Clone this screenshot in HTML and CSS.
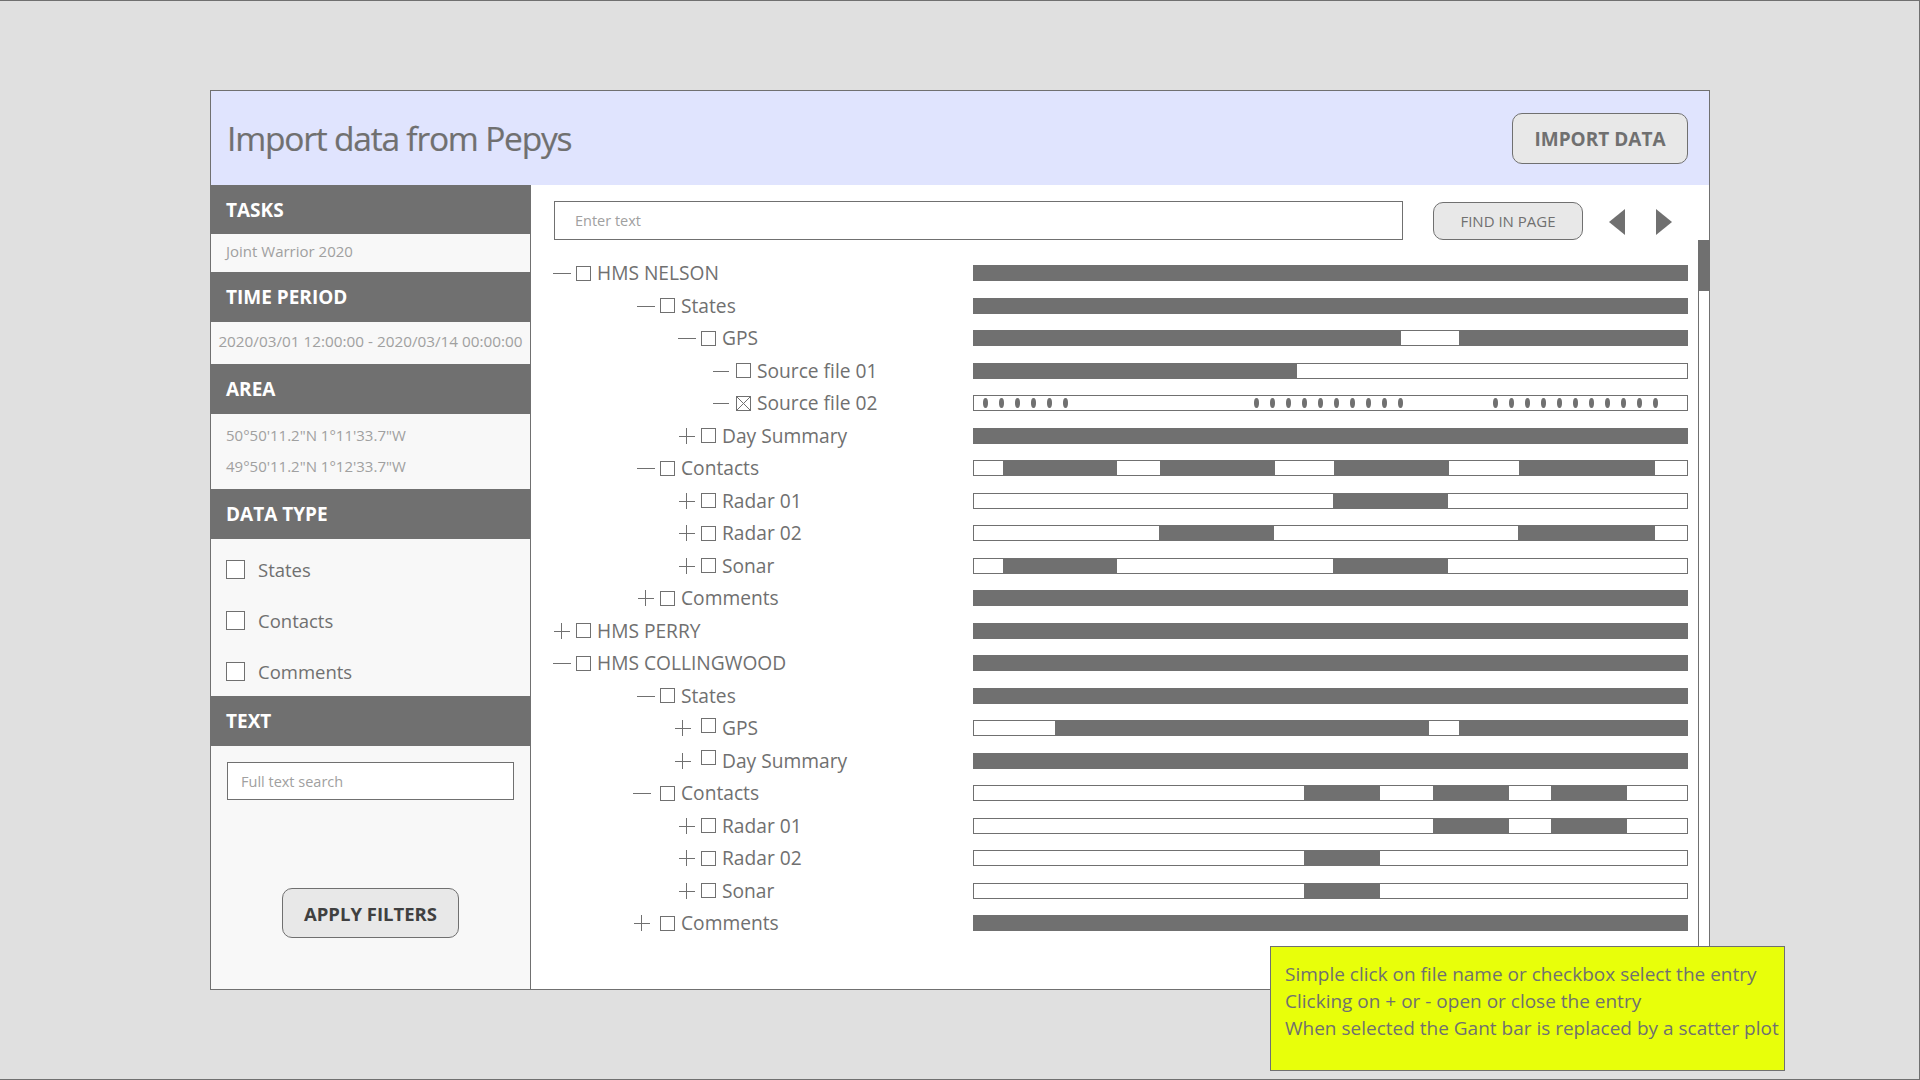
FILE: index.html
```html
<!DOCTYPE html>
<html lang="en">
<head>
<meta charset="utf-8">
<title>Import data from Pepys</title>
<link rel="stylesheet" href="styles.css">
</head>
<body>
<div class="panel">
  <header class="header">
    <h1 class="title">Import data from Pepys</h1>
    <button class="btn import-btn">IMPORT DATA</button>
  </header>
  <div class="body">
    <aside class="sidebar">
      <div class="sec-head first">TASKS</div>
      <div class="sec-row tasks">Joint Warrior 2020</div>
      <div class="sec-head">TIME PERIOD</div>
      <div class="sec-row time">2020/03/01 12:00:00 - 2020/03/14 00:00:00</div>
      <div class="sec-head">AREA</div>
      <div class="area">
        <div class="area-line">50°50'11.2"N 1°11'33.7"W</div>
        <div class="area-line">49°50'11.2"N 1°12'33.7"W</div>
      </div>
      <div class="sec-head">DATA TYPE</div>
      <div class="types">
        <label class="type"><span class="cb"></span><span>States</span></label>
        <label class="type"><span class="cb"></span><span>Contacts</span></label>
        <label class="type"><span class="cb"></span><span>Comments</span></label>
      </div>
      <div class="sec-head">TEXT</div>
      <div class="text-sec">
        <input class="fts" type="text" placeholder="Full text search">
        <button class="btn apply-btn">APPLY FILTERS</button>
      </div>
    </aside>
    <main class="main">
      <div class="toolbar">
        <input class="search" type="text" placeholder="Enter text">
        <button class="btn find-btn">FIND IN PAGE</button>
        <svg class="arrow prev" width="16" height="26" viewBox="0 0 16 26"><polygon points="16,0 16,26 0,13" fill="#707070"/></svg>
        <svg class="arrow next" width="16" height="26" viewBox="0 0 16 26"><polygon points="0,0 0,26 16,13" fill="#707070"/></svg>
      </div>
      <div class="content">
        <div class="tree">
          <div class="row"><div class="label l0"><span class="tg minus"></span><span class="box"></span><span class="name">HMS NELSON</span></div><div class="bar full"></div></div>
          <div class="row"><div class="label l1"><span class="tg minus"></span><span class="box"></span><span class="name">States</span></div><div class="bar full"></div></div>
          <div class="row"><div class="label l2"><span class="tg minus"></span><span class="box"></span><span class="name">GPS</span></div>
            <div class="bar"><i class="on" style="width:428px"></i><i class="off" style="width:58px"></i><i class="on" style="width:229px"></i></div></div>
          <div class="row"><div class="label l3"><span class="tg minus short"></span><span class="box"></span><span class="name">Source file 01</span></div>
            <div class="bar"><i class="on" style="width:324px"></i><i class="off" style="width:391px"></i></div></div>
          <div class="row"><div class="label l3"><span class="tg minus short"></span><span class="box checked"></span><span class="name">Source file 02</span></div>
            <div class="bar scatter">
              <i class="dot" style="margin-left:9px"></i><i class="dot"></i><i class="dot"></i><i class="dot"></i><i class="dot"></i><i class="dot"></i>
              <i class="dot" style="margin-left:186px"></i><i class="dot"></i><i class="dot"></i><i class="dot"></i><i class="dot"></i><i class="dot"></i><i class="dot"></i><i class="dot"></i><i class="dot"></i><i class="dot"></i>
              <i class="dot" style="margin-left:90px"></i><i class="dot"></i><i class="dot"></i><i class="dot"></i><i class="dot"></i><i class="dot"></i><i class="dot"></i><i class="dot"></i><i class="dot"></i><i class="dot"></i><i class="dot"></i>
            </div></div>
          <div class="row"><div class="label l2"><span class="tg plus"></span><span class="box"></span><span class="name">Day Summary</span></div><div class="bar full"></div></div>
          <div class="row"><div class="label l1"><span class="tg minus"></span><span class="box"></span><span class="name">Contacts</span></div>
            <div class="bar"><i class="off" style="width:30px"></i><i class="on" style="width:114px"></i><i class="off" style="width:43px"></i><i class="on" style="width:115px"></i><i class="off" style="width:59px"></i><i class="on" style="width:115px"></i><i class="off" style="width:70px"></i><i class="on" style="width:136px"></i><i class="off" style="width:33px"></i></div></div>
          <div class="row"><div class="label l2"><span class="tg plus"></span><span class="box"></span><span class="name">Radar 01</span></div>
            <div class="bar"><i class="off" style="width:360px"></i><i class="on" style="width:115px"></i><i class="off" style="width:240px"></i></div></div>
          <div class="row"><div class="label l2"><span class="tg plus"></span><span class="box"></span><span class="name">Radar 02</span></div>
            <div class="bar"><i class="off" style="width:186px"></i><i class="on" style="width:115px"></i><i class="off" style="width:244px"></i><i class="on" style="width:137px"></i><i class="off" style="width:33px"></i></div></div>
          <div class="row"><div class="label l2"><span class="tg plus"></span><span class="box"></span><span class="name">Sonar</span></div>
            <div class="bar"><i class="off" style="width:30px"></i><i class="on" style="width:114px"></i><i class="off" style="width:216px"></i><i class="on" style="width:115px"></i><i class="off" style="width:240px"></i></div></div>
          <div class="row"><div class="label l1"><span class="tg plus"></span><span class="box"></span><span class="name">Comments</span></div><div class="bar full"></div></div>
          <div class="row"><div class="label l0"><span class="tg plus"></span><span class="box"></span><span class="name">HMS PERRY</span></div><div class="bar full"></div></div>
          <div class="row"><div class="label l0"><span class="tg minus"></span><span class="box"></span><span class="name">HMS COLLINGWOOD</span></div><div class="bar full"></div></div>
          <div class="row"><div class="label l1"><span class="tg minus"></span><span class="box"></span><span class="name">States</span></div><div class="bar full"></div></div>
          <div class="row"><div class="label l2"><span class="tg plus away"></span><span class="box up"></span><span class="name">GPS</span></div>
            <div class="bar"><i class="off" style="width:82px"></i><i class="on" style="width:374px"></i><i class="off" style="width:30px"></i><i class="on" style="width:229px"></i></div></div>
          <div class="row"><div class="label l2"><span class="tg plus away"></span><span class="box up"></span><span class="name">Day Summary</span></div><div class="bar full"></div></div>
          <div class="row"><div class="label l1"><span class="tg minus away"></span><span class="box"></span><span class="name">Contacts</span></div>
            <div class="bar"><i class="off" style="width:331px"></i><i class="on" style="width:76px"></i><i class="off" style="width:53px"></i><i class="on" style="width:76px"></i><i class="off" style="width:42px"></i><i class="on" style="width:76px"></i><i class="off" style="width:61px"></i></div></div>
          <div class="row"><div class="label l2"><span class="tg plus"></span><span class="box"></span><span class="name">Radar 01</span></div>
            <div class="bar"><i class="off" style="width:460px"></i><i class="on" style="width:76px"></i><i class="off" style="width:42px"></i><i class="on" style="width:76px"></i><i class="off" style="width:61px"></i></div></div>
          <div class="row"><div class="label l2"><span class="tg plus"></span><span class="box"></span><span class="name">Radar 02</span></div>
            <div class="bar"><i class="off" style="width:331px"></i><i class="on" style="width:76px"></i><i class="off" style="width:308px"></i></div></div>
          <div class="row"><div class="label l2"><span class="tg plus"></span><span class="box"></span><span class="name">Sonar</span></div>
            <div class="bar"><i class="off" style="width:331px"></i><i class="on" style="width:76px"></i><i class="off" style="width:308px"></i></div></div>
          <div class="row"><div class="label l1"><span class="tg plus away"></span><span class="box"></span><span class="name">Comments</span></div><div class="bar full"></div></div>
        </div>
        <div class="scroll"><div class="thumb"></div></div>
      </div>
    </main>
  </div>
</div>
<div class="note">
  Simple click on file name or checkbox select the entry<br>
  Clicking on + or - open or close the entry<br>
  When selected the Gant bar is replaced by a scatter plot
</div>
</body>
</html>
```

FILE: styles.css
```css
* { box-sizing: border-box; }
html, body { margin: 0; }
body {
  width: 1920px;
  height: 1080px;
  background: #e0e0e0;
  border-top: 1px solid #707070;
  border-right: 1px solid #707070;
  border-bottom: 1px solid #707070;
  padding: 89px 0 0 210px;
  font-family: "Open Sans", "Noto Sans", sans-serif;
  color: #707070;
  position: relative;
  overflow: hidden;
}
.panel {
  width: 1500px;
  height: 900px;
  border: 1px solid #707070;
  background: #fff;
  display: flex;
  flex-direction: column;
}
.header {
  height: 94px;
  flex: none;
  background: #e0e4fe;
  display: flex;
  align-items: center;
  justify-content: space-between;
  padding: 0 21px 0 16px;
}
.title {
  margin: 0;
  font-size: 33.5px;
  font-weight: 400;
  letter-spacing: -1.2px;
  color: #707070;
  white-space: nowrap;
  -webkit-text-stroke: 0.2px #707070;
}
.btn {
  font-family: "Open Sans", "Noto Sans", sans-serif;
  background: #e8e8e8;
  border: 1px solid #707070;
  border-radius: 10px;
  color: #707070;
  padding: 0;
  cursor: pointer;
  white-space: nowrap;
}
.import-btn {
  width: 176px;
  height: 51px;
  font-size: 19px;
  font-weight: 700;
  margin-top: 1px;
}
.body {
  flex: 1;
  display: flex;
  min-height: 0;
}
.sidebar {
  width: 320px;
  flex: none;
  background: #f8f8f8;
  border-right: 1px solid #707070;
  display: flex;
  flex-direction: column;
}
.sec-head {
  height: 50px;
  flex: none;
  background: #707070;
  color: #fff;
  font-weight: 700;
  font-size: 19px;
  padding-left: 15px;
  display: flex;
  align-items: center;
}
.sec-head.first { height: 49px; }
.sec-row {
  display: flex;
  align-items: center;
  font-size: 15px;
  color: #a0a0a0;
  white-space: nowrap;
}
.tasks { height: 38px; padding: 0 0 5px 15px; }
.time { height: 42px; padding-bottom: 4px; justify-content: center; font-size: 15.3px; }
.area { height: 75px; padding: 6px 0 0 15px; }
.area-line { height: 31px; line-height: 31px; font-size: 15px; color: #a0a0a0; }
.types { height: 157px; padding-top: 5px; }
.type {
  height: 51px;
  display: flex;
  align-items: center;
  padding-left: 15px;
  font-size: 18.5px;
  color: #707070;
}
.cb {
  width: 19px;
  height: 19px;
  border: 1px solid #707070;
  background: #fff;
  margin-right: 13px;
  flex: none;
}
.text-sec {
  flex: 1;
  display: flex;
  flex-direction: column;
  align-items: center;
  padding-top: 16px;
}
.fts {
  align-self: flex-start;
  margin-left: 16px;
  width: 287px;
  height: 38px;
  border: 1px solid #707070;
  background: #fff;
  padding: 0 0 0 13px;
  font-family: "Open Sans", "Noto Sans", sans-serif;
  font-size: 14.5px;
  color: #707070;
  outline: none;
}
.fts::placeholder, .search::placeholder { color: #a0a0a0; opacity: 1; }
.apply-btn {
  margin-top: 88px;
  width: 177px;
  height: 50px;
  font-size: 18.5px;
  font-weight: 700;
  color: #404040;
}
.main {
  flex: 1;
  min-width: 0;
  display: flex;
  flex-direction: column;
}
.toolbar {
  height: 55px;
  flex: none;
  display: flex;
  align-items: center;
  padding: 16px 0 0 23px;
}
.search {
  width: 849px;
  height: 39px;
  border: 1px solid #707070;
  padding: 0 0 0 20px;
  font-family: "Open Sans", "Noto Sans", sans-serif;
  font-size: 14.5px;
  color: #707070;
  outline: none;
}
.find-btn {
  margin-left: 30px;
  width: 150px;
  height: 38px;
  font-size: 15px;
}
.arrow { flex: none; margin-top: 3px; }
.prev { margin-left: 26px; }
.next { margin-left: 31px; }
.content {
  flex: 1;
  min-height: 0;
  display: flex;
}
.tree {
  flex: 1;
  padding: 16.75px 0 0 22px;
}
.scroll {
  width: 11px;
  flex: none;
  border-left: 1px solid #707070;
  background: #fff;
}
.thumb {
  height: 51px;
  margin-left: -1px;
  background: #707070;
}
.row {
  height: 32.5px;
  display: flex;
  align-items: center;
}
.label {
  width: 420px;
  flex: none;
  display: flex;
  align-items: center;
  white-space: nowrap;
}
.l1 { padding-left: 84px; }
.l2 { padding-left: 125px; }
.l3 { padding-left: 160px; }
.tg {
  width: 18px;
  height: 16px;
  flex: none;
  position: relative;
}
.tg.short { width: 16px; margin-right: 2px; }
.tg.away { margin-left: -4px; margin-right: 4px; }
.tg::before {
  content: "";
  position: absolute;
  left: 0;
  right: 0;
  top: 8px;
  height: 1px;
  background: #707070;
}
.tg.plus::before { left: 1px; right: 1px; }
.tg.plus::after {
  content: "";
  position: absolute;
  left: 8px;
  top: 0;
  width: 1px;
  height: 16px;
  background: #707070;
}
.box {
  width: 15px;
  height: 15px;
  flex: none;
  margin-left: 5px;
  border: 1px solid #707070;
  background: #fff;
}
.box.up { margin-bottom: 6px; }
.box.checked {
  background:
    linear-gradient(to top right, transparent calc(50% - 0.6px), #707070 50%, transparent calc(50% + 0.6px)),
    linear-gradient(to bottom right, transparent calc(50% - 0.6px), #707070 50%, transparent calc(50% + 0.6px)),
    #fff;
}
.name {
  margin-left: 6px;
  font-size: 19.2px;
  line-height: 24px;
  color: #707070;
}
.bar {
  width: 715px;
  height: 16px;
  flex: none;
  display: flex;
}
.bar.full { background: #707070; }
.bar i { display: block; height: 16px; flex: none; }
.bar .on { background: #707070; }
.bar .off {
  background: #fff;
  border-top: 1px solid #707070;
  border-bottom: 1px solid #707070;
}
.bar .off:first-child { border-left: 1px solid #707070; }
.bar .off:last-child { border-right: 1px solid #707070; }
.bar.scatter {
  border: 1px solid #707070;
  background: #fff;
  align-items: center;
}
.bar.scatter .dot {
  width: 5px;
  height: 10px;
  border-radius: 50%;
  background: #707070;
  margin-left: 11px;
}
.note {
  position: absolute;
  left: 1270px;
  top: 945px;
  width: 515px;
  height: 125px;
  background: #e8ff0a;
  border: 1px solid #707070;
  padding: 14px 0 0 14px;
  font-size: 19px;
  line-height: 27px;
  color: #707070;
  white-space: nowrap;
}
```
